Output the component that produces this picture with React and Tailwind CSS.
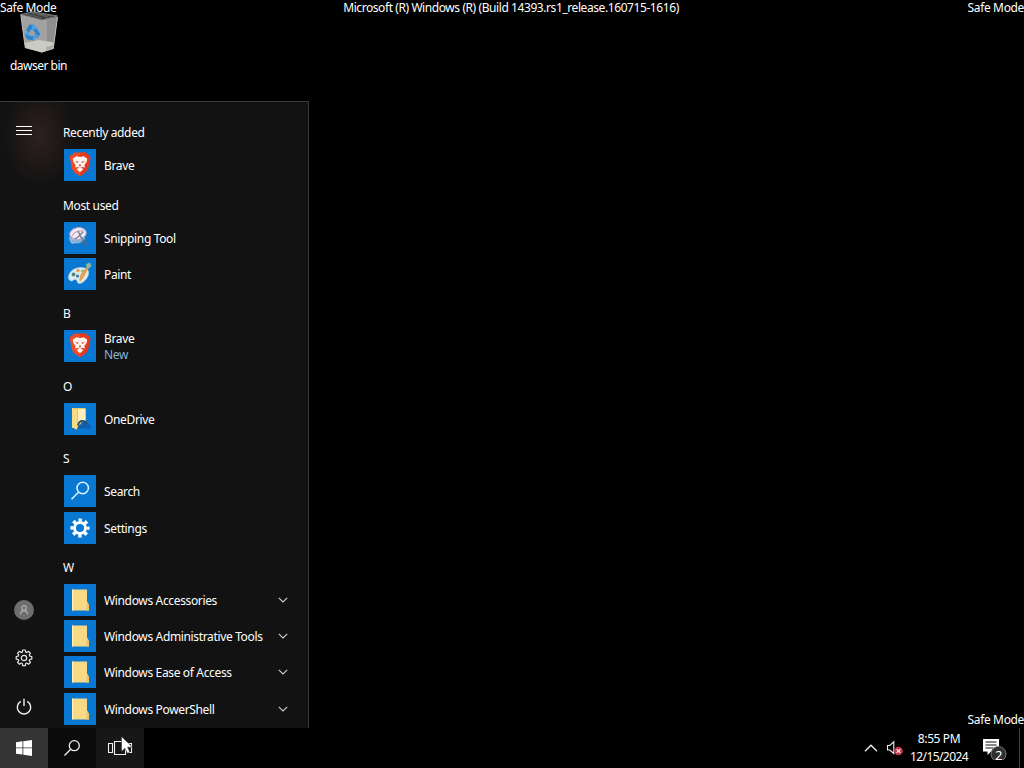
const APP_ROWS = [
  { header: "Recently added" },
  { name: "Brave", icon: BraveIcon },
  { header: "Most used" },
  { name: "Snipping Tool", icon: SnippingIcon },
  { name: "Paint", icon: PaintIcon },
  { header: "B" },
  { name: "Brave", icon: BraveIcon, isNew: true },
  { header: "O" },
  { name: "OneDrive", icon: OneDriveIcon },
  { header: "S" },
  { name: "Search", icon: SearchIcon },
  { name: "Settings", icon: SettingsIcon },
  { header: "W" },
  { name: "Windows Accessories", icon: FolderIcon, folder: true },
  { name: "Windows Administrative Tools", icon: FolderIcon, folder: true },
  { name: "Windows Ease of Access", icon: FolderIcon, folder: true },
  { name: "Windows PowerShell", icon: FolderIcon, folder: true }
];

function BraveIcon() {
  return (
    <svg viewBox="0 0 32 32" className="w-8 h-8">
      <path d="M10.500 3.500h11l2.300 2.300 1.500.2 1.300 3.200-1 2.300-1.700 8.800-2.200 3L16 27.300l-5.700-4-2.200-3-1.700-8.800-1-2.300L6.700 6l1.500-.2z" fill="#f04b25" />
      <path d="M16 3.500h5.500l2.300 2.300 1.500.2 1.300 3.200-1 2.300-1.700 8.800-2.200 3L16 27.300z" fill="#e23a1e" />
      <path d="M8.800 9.500l3.700-2.200 3.500.8 3.500-.8 3.700 2.200-.5 3.300-2.300 3.200.6 2.600-2.400-.6-2.600 1.100-2.600-1.100-2.400.6.6-2.600-2.300-3.200z" fill="#fff4ee" />
      <path d="M12.500 20l3.500-1.600 3.500 1.600-3.500 3.300z" fill="#fff4ee" />
      <path d="M10.800 12l4 .8-1.200 1.300zM21.200 12l-4 .8 1.200 1.300zM15 15.500h2l-.4 2h-1.200z" fill="#c9452f" />
    </svg>
  );
}

function SnippingIcon() {
  return (
    <svg viewBox="0 0 32 32" className="w-8 h-8">
      <ellipse cx="13" cy="16.500" rx="8" ry="5" fill="#7fb0da" />
      <ellipse cx="14" cy="11.500" rx="8.300" ry="5.800" fill="#f2edf4" stroke="#b8a4c6" strokeWidth="1" transform="rotate(-10 14 11.500)" />
      <path d="M8 14.500c1-4 5-5.500 11-6" stroke="#dcaebc" strokeWidth="1.300" fill="none" />
      <path d="M14 9l3 6 4 5M19.500 9.500l-5 5-5 3.500" stroke="#75818f" strokeWidth="1.400" fill="none" />
      <circle cx="9" cy="19" r="2" fill="none" stroke="#a3bad4" strokeWidth="1.300" />
      <ellipse cx="20.500" cy="21" rx="2.500" ry="1.800" fill="none" stroke="#3f6f9f" strokeWidth="1.500" transform="rotate(40 20.500 21)" />
    </svg>
  );
}

function PaintIcon() {
  return (
    <svg viewBox="0 0 32 32" className="w-8 h-8">
      <path d="M4.500 19C5 13 11 9 18 9.500c5 .3 7.500 3 6.500 7-1 4-5 8.500-9 9-3 .3-1.500-3.500-4-4-2-.4-2.500 2-4.500 1.500-1.700-.4-2.700-2-2.500-4z" fill="#dcecf2" stroke="#a9c9da" strokeWidth=".6" />
      <circle cx="9.500" cy="16.500" r="1.900" fill="#4f8b78" />
      <circle cx="14" cy="12.500" r="1.700" fill="#e69c5f" />
      <ellipse cx="19" cy="13" rx="2.200" ry="1.600" fill="#8fc36c" />
      <circle cx="13.500" cy="18" r="1.600" fill="#3f7ea4" />
      <path d="M26 6.500L24 10c-2 5-4 11-8.500 14-.5-4 .5-8 3.500-10.500L23 9z" fill="#e5a057" />
      <path d="M22 6l4-1.500 1.500 3.500-3 3-2-1.500z" fill="#8eb79b" />
    </svg>
  );
}

function OneDriveIcon() {
  return (
    <svg viewBox="0 0 32 32" className="w-8 h-8">
      <path d="M8 5h13l1 1v13l-9 6H8z" fill="#e9c665" />
      <path d="M14 6h7v12l-7 4z" fill="#fbeeb8" />
      <path d="M8 5l5 2.500V27l-5-3z" fill="#f8dc83" />
      <path d="M15.500 25.500c-2-1-1.500-4 1-4 .5-3 4.500-4 6.300-1.500 2.500-.3 3.500 1.500 3.200 3 1.500.5 1 2.500-.5 2.500z" fill="#1261ad" />
      <path d="M14 22.500c1-5.500 6.500-6 9-2" stroke="#27485f" strokeWidth="1.800" fill="none" />
    </svg>
  );
}

function SearchIcon() {
  return (
    <svg viewBox="0 0 32 32" className="w-8 h-8" fill="none" stroke="#d9f2ff" strokeWidth="1.600">
      <circle cx="18.700" cy="13" r="5.700" />
      <path d="M14.500 17.200L7.500 24.200" />
    </svg>
  );
}

function SettingsIcon() {
  return (
    <svg viewBox="0 0 32 32" className="w-8 h-8" fill="none" stroke="#fff">
      <circle cx="16" cy="16" r="5.500" strokeWidth="3" />
      <circle cx="16" cy="16" r="8.100" strokeWidth="3" strokeDasharray="3.360 3" strokeDashoffset="1.680" />
    </svg>
  );
}

function FolderIcon() {
  return (
    <svg viewBox="0 0 32 32" className="w-8 h-8">
      <path d="M8 5.500h15v12l2 3.500v5.500H8z" fill="#f8da86" />
      <path d="M23 17.500l2 3.500v5.500h-2.500V21z" fill="#edc46c" />
      <path d="M8 5.500h1.200v21H8z" fill="#fff0b5" />
    </svg>
  );
}

function RecycleBin() {
  return (
    <svg viewBox="0 0 40 42" className="w-10 h-[42px]">
      <path d="M1.800 3.500L23 9l15.500-3-4.300 32L23 41.500 6.300 37z" fill="#a2a2a2" />
      <path d="M28 8l10.500-2-4.300 32L28 40z" fill="#8f8f8f" />
      <path d="M5.700 32L20 29l14.800 2.500-.9 6L23 41.500 6.300 37z" fill="#cbcbc1" />
      <path d="M27 36l7.500-2-.6 3.500-6.900 2.500z" fill="#aeada8" />
      <path d="M1.800 3.500l4.500 33.500M38.500 6l-4.300 32" stroke="#bdbdbd" strokeWidth="1" />
      <path d="M1.800 3.500L14 .8 38.500 5 23 9z" fill="#3c3c3c" stroke="#999" strokeWidth=".8" />
      <path d="M7 3l16 4M13 2l16 4M20 2.500l12 2.500" stroke="#777" strokeWidth=".7" />
      <g fill="none" stroke="#2b83cf" strokeWidth="4">
        <path d="M8.500 20.500l3-4.800 3.500.3" />
        <path d="M15.500 17.500l3.500 5.500-2 3" />
        <path d="M15 27.500l-5.500-1-2-3.500" />
      </g>
      <path d="M13.500 12.500l5.500 5-6 1.500zM20 24l-6 6v-6zM4.800 22.500l5.500-2 .7 5z" fill="#4da0df" />
    </svg>
  );
}

// Outline gear drawn as eight teeth round a ring
function GearOutline() {
  return (
    <svg viewBox="0 0 18 18" className="w-[18px] h-[18px]" fill="none" stroke="#e6e6e6" strokeWidth="1.200" strokeLinejoin="round">
      <path d="M7.700 1h2.600l.4 2.100 1.100.45 1.800-1.200 1.850 1.850-1.200 1.800.45 1.100 2.100.4v2.600l-2.100.4-.45 1.100 1.200 1.800-1.850 1.850-1.800-1.200-1.100.45-.4 2.100H7.700l-.4-2.100-1.100-.45-1.800 1.200-1.850-1.850 1.200-1.800-.45-1.100-2.100-.4V7.500l2.100-.4.450-1.100-1.200-1.800L4.400 2.350l1.800 1.200 1.100-.45z" />
      <circle cx="9" cy="9" r="2.700" />
    </svg>
  );
}

function PowerIcon() {
  return (
    <svg viewBox="0 0 18 18" className="w-[18px] h-[18px]" fill="none" stroke="#f0f0f0" strokeWidth="1.400">
      <path d="M5.800 3.400a6.700 6.700 0 1 0 6.400 0M9 .8v7.200" />
    </svg>
  );
}

function MenuRow({ row }) {
  if (row.header) {
    return (
      <div className="h-[36.230px] pt-[8.400px] flex items-center text-white">{row.header}</div>
    );
  }

  const Icon = row.icon;
  return (
    <div className="h-[36.230px] flex items-center">
      <div className="w-8 h-8 ml-px bg-[#0878d3] shrink-0">
        <Icon />
      </div>
      <div className="ml-2 pt-[2px] leading-4 whitespace-nowrap">
        <div>{row.name}</div>
        {row.isNew && <div className="text-[#84b4d6]">New</div>}
      </div>
      {row.folder && (
        <svg viewBox="0 0 10 6" className="w-2.5 h-1.5 ml-auto mr-5" fill="none" stroke="#d0d0d0" strokeWidth="1.100">
          <path d="M.8.8L5 5 9.200.8" />
        </svg>
      )}
    </div>
  );
}

function StartMenu() {
  return (
    <div className="w-[309px] h-[627px] bg-[#121212] bg-[radial-gradient(ellipse_36px_52px_at_39px_34px,#2e2120_0,#241b1a_35%,#121212_100%)] border-t border-r border-[#3a3a3a] flex overflow-hidden">
      <div className="w-12 shrink-0 flex flex-col items-center">
        <div className="mt-6 w-4 h-[9px] border-y border-white flex items-center">
          <div className="w-4 h-px bg-white" />
        </div>
        <div className="mt-auto w-5 h-5 rounded-full bg-[#6e6e6e] flex items-center justify-center">
          <svg viewBox="0 0 12 12" className="w-3 h-3" fill="none" stroke="#aaa" strokeWidth="1.300">
            <circle cx="6" cy="4" r="2.300" />
            <path d="M2.500 10.500c0-5 7-5 7 0" />
          </svg>
        </div>
        <div className="mt-[29px]"><GearOutline /></div>
        <div className="mt-[31px] mb-3"><PowerIcon /></div>
      </div>
      <div className="flex-1 pl-[15px] pt-[9px]">
        {APP_ROWS.map((row, index) => (
          <MenuRow key={index} row={row} />
        ))}
      </div>
    </div>
  );
}

function Taskbar() {
  return (
    <div className="h-10 flex text-white">
      <div className="w-12 bg-[#343434] flex items-center justify-center">
        <svg viewBox="0 0 16 16" className="w-4 h-4" fill="#fff">
          <path d="M0 2.200l6.500-.9v6.200H0zM7.300 1.200L16 0v7.500H7.300zM0 8.300h6.500v6.300L0 13.700zM7.300 8.300H16V16l-8.700-1.300z" />
        </svg>
      </div>
      <div className="w-12 bg-[#0b0b0b] flex items-center justify-center">
        <svg viewBox="0 0 16 16" className="w-4 h-4" fill="none" stroke="#eee" strokeWidth="1.300">
          <circle cx="10.300" cy="5.700" r="5" />
          <path d="M6.700 9.300L.5 15.500" />
        </svg>
      </div>
      <div className="w-12 bg-[#171717] flex items-center justify-center relative">
        <svg viewBox="0 0 26 16" className="w-[26px] h-4" fill="none" stroke="#f0f0f0" strokeWidth="1.100">
          <path d="M1.500 3.500h4v9h-4zM7.500 1.500h11v13h-11zM20.500 3.500h4v9h-4" />
        </svg>
        <svg viewBox="0 0 12 18" className="absolute left-[25px] top-[8px] w-3 h-[18px]">
          <path d="M.5.500v15l3.500-3.300 2.300 5 2.500-1.200-2.200-4.800h4.900z" fill="#fff" stroke="#222" strokeWidth=".5" />
        </svg>
      </div>
      <div className="ml-auto flex items-center">
        <svg viewBox="0 0 14 8" className="w-3.5 h-2" fill="none" stroke="#f0f0f0" strokeWidth="1.300">
          <path d="M1 7.200L7 1.200l6 6" />
        </svg>
        <svg viewBox="0 0 18 16" className="w-[18px] h-4 ml-2" fill="none">
          <path d="M1.500 5.500h2.300l4-3.700v11.700l-4-3.500H1.500z" stroke="#eee" strokeWidth="1.100" />
          <circle cx="12.500" cy="11" r="4.300" fill="#c8324a" />
          <path d="M10.600 9.100l3.800 3.800M14.400 9.100l-3.800 3.800" stroke="#ffe5ea" strokeWidth="1.300" />
        </svg>
        <div className="w-[60px] ml-[5px] text-center leading-[18px]">
          <div className="tracking-[-0.400px]">8:55 PM</div>
          <div className="tracking-[-0.580px]">12/15/2024</div>
        </div>
        <div className="ml-3.5 w-6 h-6 relative">
          <svg viewBox="0 0 24 24" className="w-6 h-6">
            <path d="M0 3h16v12.500H8L4.500 19v-3.500H0z" fill="#fff" />
            <path d="M2.500 6h11M2.500 9h11M2.500 12h8" stroke="#111" strokeWidth="1" />
            <circle cx="15.500" cy="18" r="7.500" fill="#303030" stroke="#777" strokeWidth="1" />
          </svg>
          <span className="absolute left-[12px] top-[11px] leading-4 text-[13px]">2</span>
        </div>
        <div className="h-10 w-px bg-[#454545] ml-3 mr-1" />
      </div>
    </div>
  );
}

export default function App() {
  return (
    <div className="w-[1024px] h-[768px] bg-black text-white text-[12px] leading-4 tracking-[-0.350px] font-['Noto_Sans','Open_Sans',sans-serif] flex flex-col overflow-hidden relative">
      <div className="h-[101px] relative">
        <div className="flex justify-between whitespace-nowrap">
          <span>Safe Mode</span>
          <span className="tracking-[-0.420px] -ml-0.5">Microsoft (R) Windows (R) (Build 14393.rs1_release.160715-1616)</span>
          <span>Safe Mode</span>
        </div>
        <div className="absolute left-0 top-[11px] w-[77px] flex flex-col items-center">
          <RecycleBin />
          <span className="mt-[5px] tracking-[-0.500px]">dawser bin</span>
        </div>
      </div>
      <div className="flex items-end justify-between">
        <StartMenu />
        <span>Safe Mode</span>
      </div>
      <Taskbar />
    </div>
  );
}
